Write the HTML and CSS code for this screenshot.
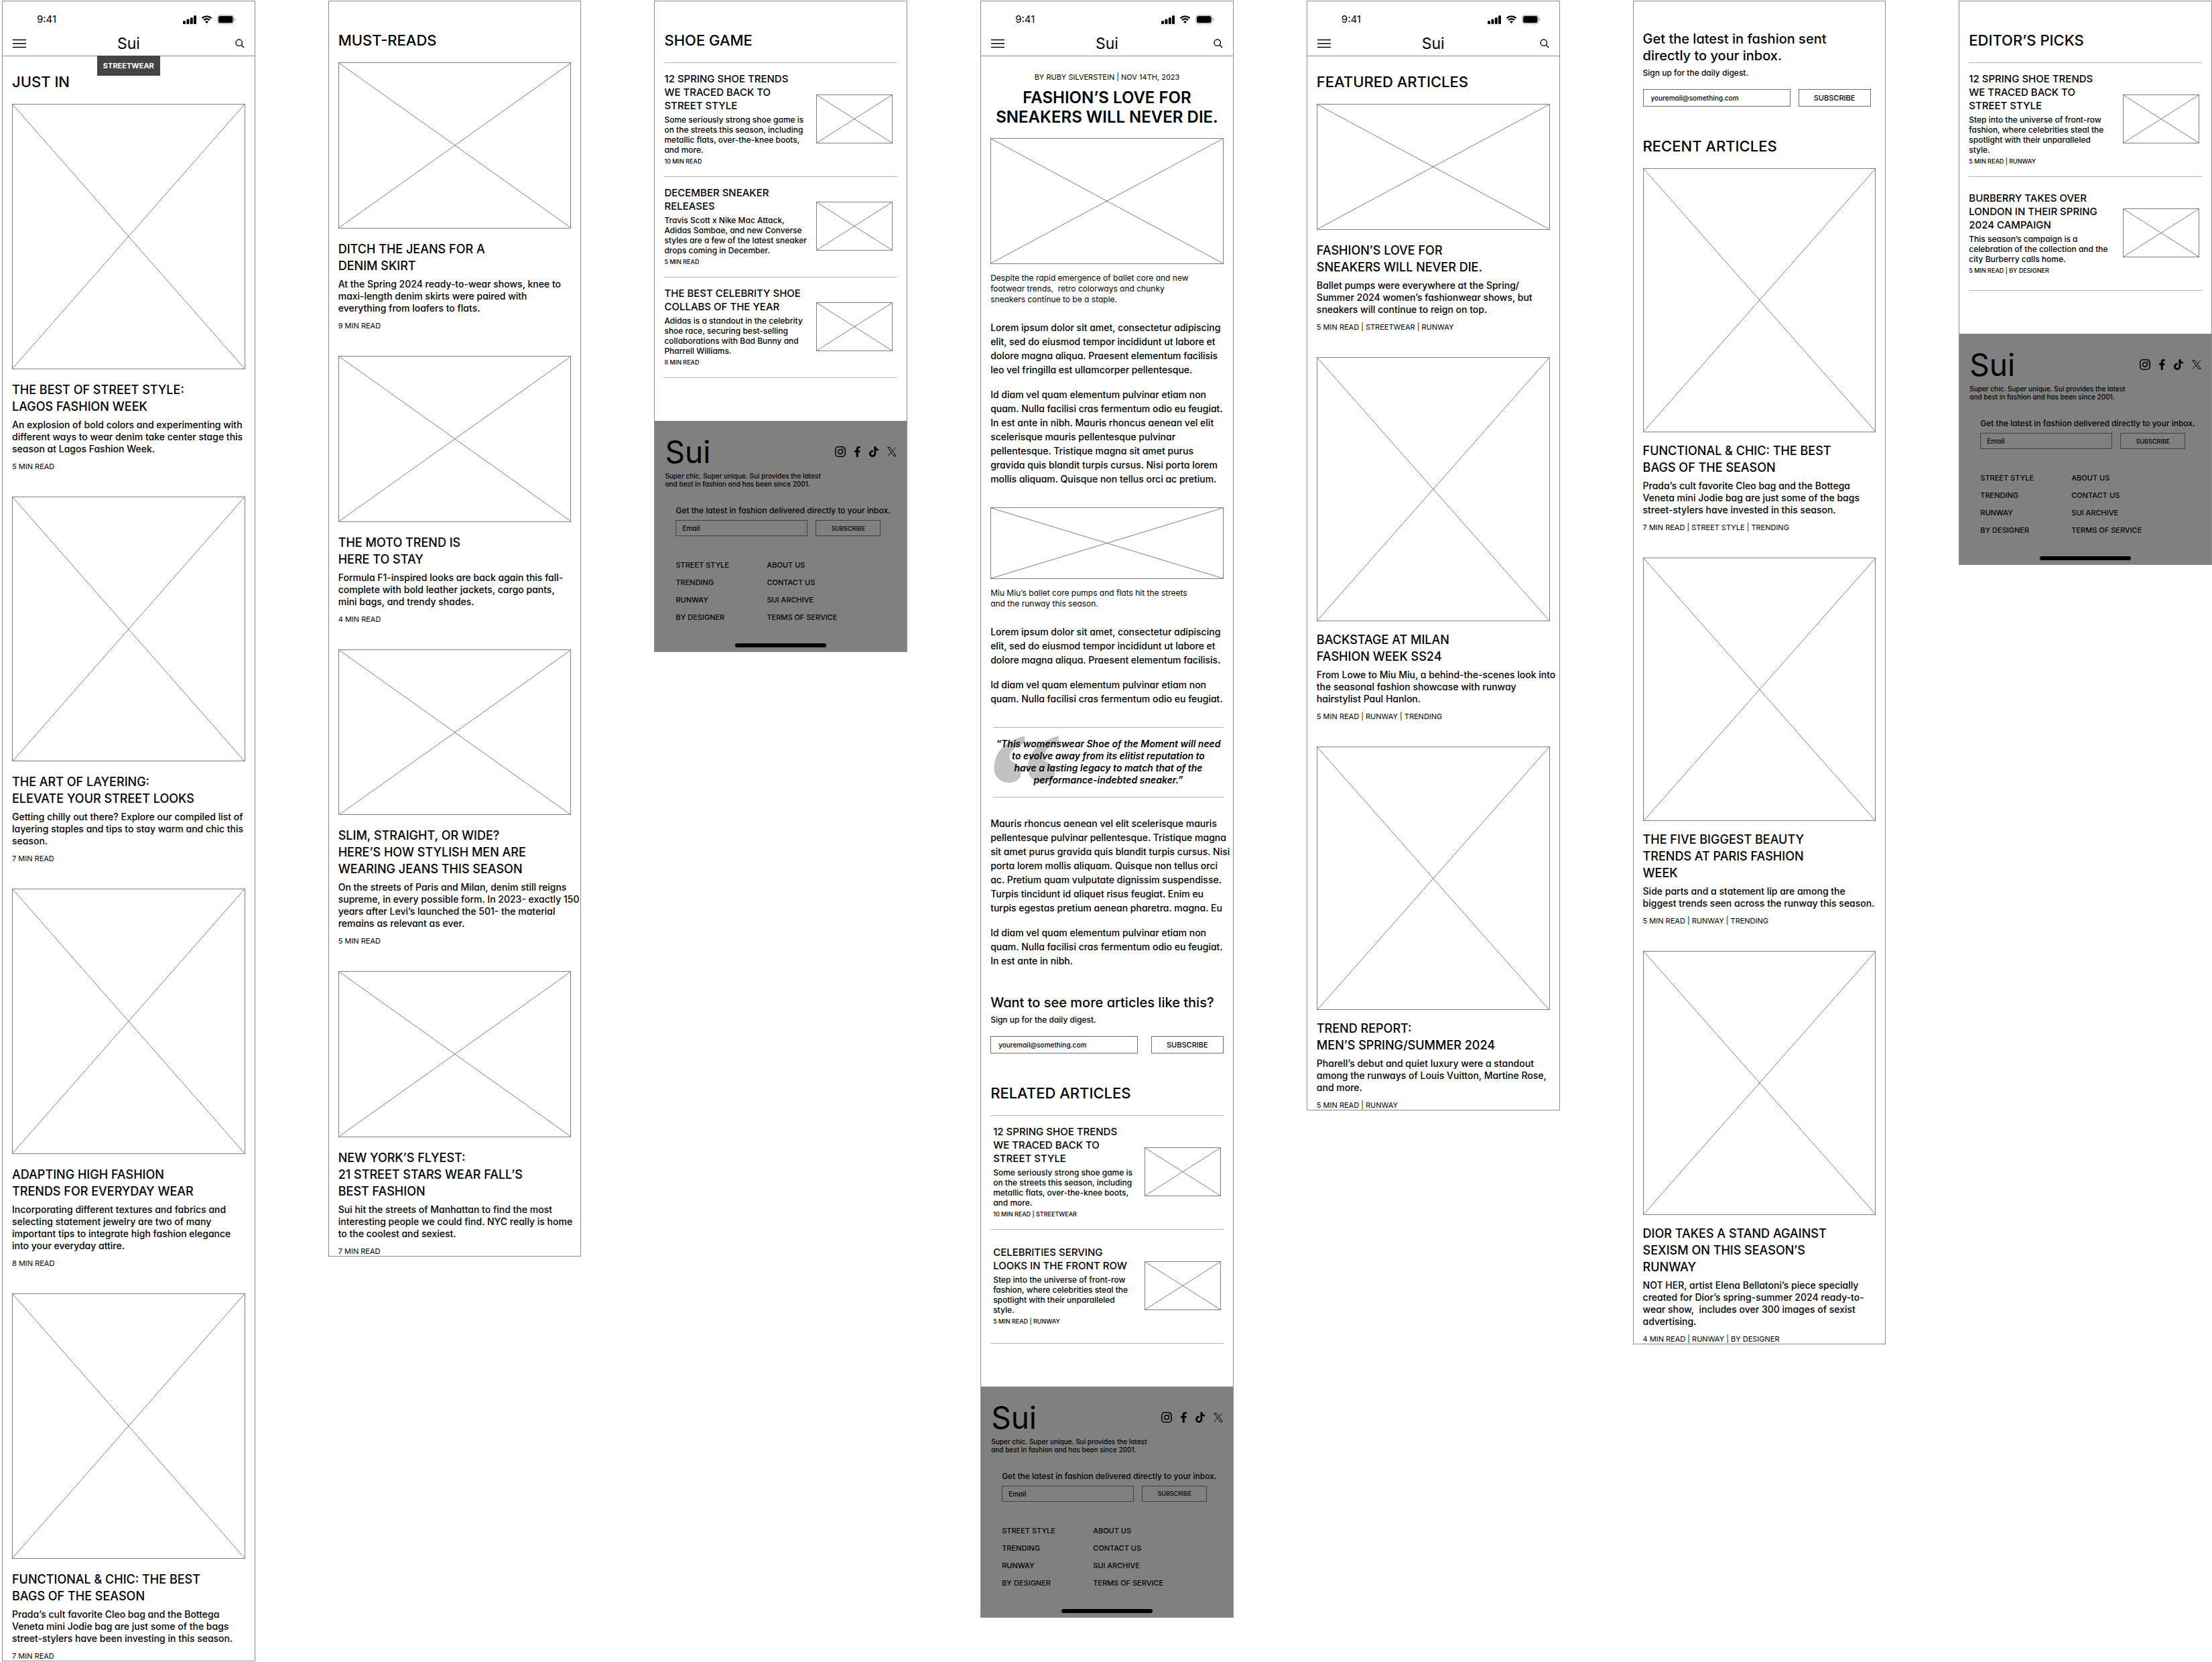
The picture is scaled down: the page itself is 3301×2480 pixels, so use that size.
FILE: index.html
```html
<!DOCTYPE html>
<html lang="en">
<head>
<meta charset="utf-8">
<meta name="viewport" content="width=device-width, initial-scale=1">
<title>Sui</title>
<link rel="stylesheet" href="styles.css">
</head>
<body>
<svg class="sprite" aria-hidden="true">
  <symbol id="signal" viewBox="0 0 20 13"><rect x="0" y="8" width="4" height="5" rx="1.5"/><rect x="5.4" y="5.5" width="4" height="7.5" rx="1.5"/><rect x="10.8" y="3" width="4" height="10" rx="1.5"/><rect x="16" y="0" width="4" height="13" rx="1.5"/></symbol>
  <symbol id="wifi" viewBox="0 0 17 12"><path d="M8.5 2.6c2.3 0 4.5.9 6.1 2.4.1.1.3.1.4 0l1.2-1.2c.1-.1.1-.3 0-.5a11.1 11.1 0 0 0-15.400 0c-.1.1-.1.300 0 .5L2 5c.1.100.3.1.4 0a8.900 8.900 0 0 1 6.100-2.400zm0 3.900c1.300 0 2.500.5 3.400 1.300.1.1.300.1.500 0l1.200-1.200c.1-.1.1-.300 0-.5a7.400 7.400 0 0 0-10.200 0c-.1.100-.1.300 0 .5l1.200 1.200c.1.1.300.1.500 0 .9-.800 2.100-1.300 3.400-1.300zm2.300 2.700c.1.1.1.300 0 .5l-2.100 2.100c-.1.100-.300.1-.4 0L6.200 9.700c-.1-.100-.1-.300 0-.5a3.600 3.600 0 0 1 4.600 0z"/></symbol>
  <symbol id="battery" viewBox="0 0 28 14"><rect x=".8" y=".8" width="23.900" height="12.400" rx="4" fill="none" stroke="#a6a6a6" stroke-width="1.200"/><path d="M26 4.700v4.600c1-.4 1.500-1.300 1.500-2.300S27 5.100 26 4.700z" fill="#a6a6a6"/><rect x="2" y="2" width="21.500" height="10" rx="3"/></symbol>
  <symbol id="menu" viewBox="0 0 20 14"><path d="M0 1.500h20M0 7h20M0 12.500h20" fill="none" stroke="currentColor" stroke-width="1.500"/></symbol>
  <symbol id="search" viewBox="0 0 14 14"><circle cx="5.700" cy="5.700" r="4.700" fill="none" stroke="currentColor" stroke-width="1.400"/><path d="M9.200 9.200l4 4" fill="none" stroke="currentColor" stroke-width="1.400"/></symbol>
  <symbol id="instagram" viewBox="0 0 16 16"><rect x=".8" y=".8" width="14.400" height="14.400" rx="4" fill="none" stroke="currentColor" stroke-width="1.600"/><circle cx="8" cy="8" r="3.300" fill="none" stroke="currentColor" stroke-width="1.600"/><circle cx="12.200" cy="3.800" r="1"/></symbol>
  <symbol id="facebook" viewBox="0 0 9 16"><path d="M5.800 16V9h2.300l.5-2.900H5.800V4.400c0-.9.4-1.600 1.600-1.600h1.400V.3C8.400.200 7.600 0 6.700 0 4.400 0 2.700 1.400 2.700 4v2.100H.200V9h2.500v7z"/></symbol>
  <symbol id="tiktok" viewBox="0 0 14 16"><path d="M10.200 0H7.500v10.900a2.300 2.300 0 1 1-2.300-2.300c.2 0 .4 0 .6.100V5.900a5.100 5.100 0 1 0 4.400 5V5.400a6.300 6.300 0 0 0 3.700 1.200V3.900A3.800 3.800 0 0 1 10.200 0z"/></symbol>
  <symbol id="x" viewBox="0 0 14 14"><path d="M.8.6h3.400l9 12.800H9.800zM12.800.6L7.700 6.200M6 7.900L1 13.400" fill="none" stroke="currentColor"/></symbol>
  <symbol id="cross" viewBox="0 0 100 100" preserveAspectRatio="none"><path d="M0 0L100 100M100 0L0 100" fill="none" stroke="#7d7d7d" vector-effect="non-scaling-stroke"/></symbol>
</svg>

<main class="board">

  <section class="screen">
    <header class="top">
      <div class="status"><span>9:41</span><svg width="20" height="13"><use href="#signal"/></svg><svg width="17" height="12"><use href="#wifi"/></svg><svg width="28" height="14"><use href="#battery"/></svg></div>
      <nav class="nav"><button class="icon-btn" aria-label="Menu"><svg width="20" height="14"><use href="#menu"/></svg></button><a class="logo" href="#">Sui</a><button class="icon-btn" aria-label="Search"><svg width="14" height="14"><use href="#search"/></svg></button></nav>
      <a class="tag" href="#">STREETWEAR</a>
    </header>
    <div class="content content--under-nav">
      <h2 class="heading">JUST IN</h2>
      <article class="card"><svg class="photo photo--tall"><use href="#cross"/></svg>
        <h3>THE BEST OF STREET STYLE:<br>LAGOS FASHION WEEK</h3>
        <p>An explosion of bold colors and experimenting with<br>different ways to wear denim take center stage this<br>season at Lagos Fashion Week.</p>
        <small>5 MIN READ</small></article>
      <article class="card"><svg class="photo photo--tall"><use href="#cross"/></svg>
        <h3>THE ART OF LAYERING:<br>ELEVATE YOUR STREET LOOKS</h3>
        <p>Getting chilly out there? Explore our compiled list of<br>layering staples and tips to stay warm and chic this<br>season.</p>
        <small>7 MIN READ</small></article>
      <article class="card"><svg class="photo photo--tall"><use href="#cross"/></svg>
        <h3>ADAPTING HIGH FASHION<br>TRENDS FOR EVERYDAY WEAR</h3>
        <p>Incorporating different textures and fabrics and<br>selecting statement jewelry are two of many<br>important tips to integrate high fashion elegance<br>into your everyday attire.</p>
        <small>8 MIN READ</small></article>
      <article class="card"><svg class="photo photo--tall"><use href="#cross"/></svg>
        <h3>FUNCTIONAL &amp; CHIC: THE BEST<br>BAGS OF THE SEASON</h3>
        <p>Prada’s cult favorite Cleo bag and the Bottega<br>Veneta mini Jodie bag are just some of the bags<br>street-stylers have been investing in this season.</p>
        <small>7 MIN READ</small></article>
    </div>
  </section>

  <section class="screen">
    <div class="content">
      <h2 class="heading">MUST-READS</h2>
      <article class="card"><svg class="photo photo--medium"><use href="#cross"/></svg>
        <h3>DITCH THE JEANS FOR A<br>DENIM SKIRT</h3>
        <p>At the Spring 2024 ready-to-wear shows, knee to<br>maxi-length denim skirts were paired with<br>everything from loafers to flats.</p>
        <small>9 MIN READ</small></article>
      <article class="card"><svg class="photo photo--medium"><use href="#cross"/></svg>
        <h3>THE MOTO TREND IS<br>HERE TO STAY</h3>
        <p>Formula F1-inspired looks are back again this fall-<br>complete with bold leather jackets, cargo pants,<br>mini bags, and trendy shades.</p>
        <small>4 MIN READ</small></article>
      <article class="card"><svg class="photo photo--medium"><use href="#cross"/></svg>
        <h3>SLIM, STRAIGHT, OR WIDE?<br>HERE’S HOW STYLISH MEN ARE<br>WEARING JEANS THIS SEASON</h3>
        <p>On the streets of Paris and Milan, denim still reigns<br>supreme, in every possible form. In 2023- exactly 150<br>years after Levi’s launched the 501- the material<br>remains as relevant as ever.</p>
        <small>5 MIN READ</small></article>
      <article class="card"><svg class="photo photo--medium"><use href="#cross"/></svg>
        <h3>NEW YORK’S FLYEST:<br>21 STREET STARS WEAR FALL’S<br>BEST FASHION</h3>
        <p>Sui hit the streets of Manhattan to find the most<br>interesting people we could find. NYC really is home<br>to the coolest and sexiest.</p>
        <small>7 MIN READ</small></article>
    </div>
  </section>

  <section class="screen">
    <div class="content">
      <h2 class="heading">SHOE GAME</h2>
      <ul class="feed feed--inset">
        <li><div><h3>12 SPRING SHOE TRENDS<br>WE TRACED BACK TO<br>STREET STYLE</h3><p>Some seriously strong shoe game is<br>on the streets this season, including<br>metallic flats, over-the-knee boots,<br>and more.</p><small>10 MIN READ</small></div><svg class="photo thumb"><use href="#cross"/></svg></li>
        <li><div><h3>DECEMBER SNEAKER<br>RELEASES</h3><p>Travis Scott x Nike Mac Attack,<br>Adidas Sambae, and new Converse<br>styles are a few of the latest sneaker<br>drops coming in December.</p><small>5 MIN READ</small></div><svg class="photo thumb"><use href="#cross"/></svg></li>
        <li><div><h3>THE BEST CELEBRITY SHOE<br>COLLABS OF THE YEAR</h3><p>Adidas is a standout in the celebrity<br>shoe race, securing best-selling<br>collaborations with Bad Bunny and<br>Pharrell Williams.</p><small>8 MIN READ</small></div><svg class="photo thumb"><use href="#cross"/></svg></li>
      </ul>
    </div>
    <footer class="footer">
      <div class="brand"><a class="wordmark" href="#">Sui</a>
        <div class="social"><a href="#" aria-label="Instagram"><svg width="16" height="16"><use href="#instagram"/></svg></a><a href="#" aria-label="Facebook"><svg width="9" height="16"><use href="#facebook"/></svg></a><a href="#" aria-label="TikTok"><svg width="14" height="16"><use href="#tiktok"/></svg></a><a href="#" aria-label="X"><svg width="14" height="14"><use href="#x"/></svg></a></div></div>
      <p class="tagline">Super chic. Super unique. Sui provides the latest<br>and best in fashion and has been since 2001.</p>
      <form class="signup"><label for="mail-a">Get the latest in fashion delivered directly to your inbox.</label><div class="fields"><input id="mail-a" type="email" placeholder="Email"><button type="button">SUBSCRIBE</button></div></form>
      <nav class="links"><a href="#">STREET STYLE</a><a href="#">ABOUT US</a><a href="#">TRENDING</a><a href="#">CONTACT US</a><a href="#">RUNWAY</a><a href="#">SUI ARCHIVE</a><a href="#">BY DESIGNER</a><a href="#">TERMS OF SERVICE</a></nav>
      <div class="home-bar"></div>
    </footer>
  </section>

  <section class="screen">
    <header class="top">
      <div class="status"><span>9:41</span><svg width="20" height="13"><use href="#signal"/></svg><svg width="17" height="12"><use href="#wifi"/></svg><svg width="28" height="14"><use href="#battery"/></svg></div>
      <nav class="nav"><button class="icon-btn" aria-label="Menu"><svg width="20" height="14"><use href="#menu"/></svg></button><a class="logo" href="#">Sui</a><button class="icon-btn" aria-label="Search"><svg width="14" height="14"><use href="#search"/></svg></button></nav>
    </header>
    <div class="content content--under-nav">
      <article class="story">
        <p class="byline">BY RUBY SILVERSTEIN | NOV 14TH, 2023</p>
        <h1>FASHION’S LOVE FOR<br>SNEAKERS WILL NEVER DIE.</h1>
        <figure><svg class="photo photo--wide"><use href="#cross"/></svg><figcaption>Despite the rapid emergence of ballet core and new<br>footwear trends,&nbsp; retro colorways and chunky<br>sneakers continue to be a staple.</figcaption></figure>
        <p>Lorem ipsum dolor sit amet, consectetur adipiscing<br>elit, sed do eiusmod tempor incididunt ut labore et<br>dolore magna aliqua. Praesent elementum facilisis<br>leo vel fringilla est ullamcorper pellentesque.</p>
        <p>Id diam vel quam elementum pulvinar etiam non<br>quam. Nulla facilisi cras fermentum odio eu feugiat.<br>In est ante in nibh. Mauris rhoncus aenean vel elit<br>scelerisque mauris pellentesque pulvinar<br>pellentesque. Tristique magna sit amet purus<br>gravida quis blandit turpis cursus. Nisi porta lorem<br>mollis aliquam. Quisque non tellus orci ac pretium.</p>
        <figure class="figure--inline"><svg class="photo photo--banner"><use href="#cross"/></svg><figcaption>Miu Miu’s ballet core pumps and flats hit the streets<br>and the runway this season.</figcaption></figure>
        <p>Lorem ipsum dolor sit amet, consectetur adipiscing<br>elit, sed do eiusmod tempor incididunt ut labore et<br>dolore magna aliqua. Praesent elementum facilisis.</p>
        <p>Id diam vel quam elementum pulvinar etiam non<br>quam. Nulla facilisi cras fermentum odio eu feugiat.</p>
        <blockquote>“This womenswear Shoe of the Moment will need<br>to evolve away from its elitist reputation to<br>have a lasting legacy to match that of the<br>performance-indebted sneaker.”</blockquote>
        <p>Mauris rhoncus aenean vel elit scelerisque mauris<br>pellentesque pulvinar pellentesque. Tristique magna<br>sit amet purus gravida quis blandit turpis cursus. Nisi<br>porta lorem mollis aliquam. Quisque non tellus orci<br>ac. Pretium quam vulputate dignissim suspendisse.<br>Turpis tincidunt id aliquet risus feugiat. Enim eu<br>turpis egestas pretium aenean pharetra. magna. Eu</p>
        <p>Id diam vel quam elementum pulvinar etiam non<br>quam. Nulla facilisi cras fermentum odio eu feugiat.<br>In est ante in nibh.</p>
      </article>
      <form class="digest digest--spread">
        <h2>Want to see more articles like this?</h2>
        <label for="digest-a">Sign up for the daily digest.</label>
        <div class="fields"><input id="digest-a" type="email" placeholder="youremail@something.com"><button type="button">SUBSCRIBE</button></div>
      </form>
      <h2 class="heading">RELATED ARTICLES</h2>
      <ul class="feed feed--even feed--indent">
        <li><div><h3>12 SPRING SHOE TRENDS<br>WE TRACED BACK TO<br>STREET STYLE</h3><p>Some seriously strong shoe game is<br>on the streets this season, including<br>metallic flats, over-the-knee boots,<br>and more.</p><small>10 MIN READ | STREETWEAR</small></div><svg class="photo thumb"><use href="#cross"/></svg></li>
        <li><div><h3>CELEBRITIES SERVING<br>LOOKS IN THE FRONT ROW</h3><p>Step into the universe of front-row<br>fashion, where celebrities steal the<br>spotlight with their unparalleled<br>style.</p><small>5 MIN READ | RUNWAY</small></div><svg class="photo thumb"><use href="#cross"/></svg></li>
      </ul>
    </div>
    <footer class="footer">
      <div class="brand"><a class="wordmark" href="#">Sui</a>
        <div class="social"><a href="#" aria-label="Instagram"><svg width="16" height="16"><use href="#instagram"/></svg></a><a href="#" aria-label="Facebook"><svg width="9" height="16"><use href="#facebook"/></svg></a><a href="#" aria-label="TikTok"><svg width="14" height="16"><use href="#tiktok"/></svg></a><a href="#" aria-label="X"><svg width="14" height="14"><use href="#x"/></svg></a></div></div>
      <p class="tagline">Super chic. Super unique. Sui provides the latest<br>and best in fashion and has been since 2001.</p>
      <form class="signup"><label for="mail-b">Get the latest in fashion delivered directly to your inbox.</label><div class="fields"><input id="mail-b" type="email" placeholder="Email"><button type="button">SUBSCRIBE</button></div></form>
      <nav class="links"><a href="#">STREET STYLE</a><a href="#">ABOUT US</a><a href="#">TRENDING</a><a href="#">CONTACT US</a><a href="#">RUNWAY</a><a href="#">SUI ARCHIVE</a><a href="#">BY DESIGNER</a><a href="#">TERMS OF SERVICE</a></nav>
      <div class="home-bar"></div>
    </footer>
  </section>

  <section class="screen">
    <header class="top">
      <div class="status"><span>9:41</span><svg width="20" height="13"><use href="#signal"/></svg><svg width="17" height="12"><use href="#wifi"/></svg><svg width="28" height="14"><use href="#battery"/></svg></div>
      <nav class="nav"><button class="icon-btn" aria-label="Menu"><svg width="20" height="14"><use href="#menu"/></svg></button><a class="logo" href="#">Sui</a><button class="icon-btn" aria-label="Search"><svg width="14" height="14"><use href="#search"/></svg></button></nav>
    </header>
    <div class="content content--under-nav">
      <h2 class="heading">FEATURED ARTICLES</h2>
      <article class="card"><svg class="photo photo--wide"><use href="#cross"/></svg>
        <h3>FASHION’S LOVE FOR<br>SNEAKERS WILL NEVER DIE.</h3>
        <p>Ballet pumps were everywhere at the Spring/<br>Summer 2024 women’s fashionwear shows, but<br>sneakers will continue to reign on top.</p>
        <small>5 MIN READ | STREETWEAR | RUNWAY</small></article>
      <article class="card card--close"><svg class="photo photo--high"><use href="#cross"/></svg>
        <h3>BACKSTAGE AT MILAN<br>FASHION WEEK SS24</h3>
        <p>From Lowe to Miu Miu, a behind-the-scenes look into<br>the seasonal fashion showcase with runway<br>hairstylist Paul Hanlon.</p>
        <small>5 MIN READ | RUNWAY | TRENDING</small></article>
      <article class="card card--close"><svg class="photo photo--high"><use href="#cross"/></svg>
        <h3>TREND REPORT:<br>MEN’S SPRING/SUMMER 2024</h3>
        <p>Pharell’s debut and quiet luxury were a standout<br>among the runways of Louis Vuitton, Martine Rose,<br>and more.</p>
        <small>5 MIN READ | RUNWAY</small></article>
    </div>
  </section>

  <section class="screen">
    <div class="content">
      <form class="digest">
        <h2>Get the latest in fashion sent<br>directly to your inbox.</h2>
        <label for="digest-b">Sign up for the daily digest.</label>
        <div class="fields"><input id="digest-b" type="email" placeholder="youremail@something.com"><button type="button">SUBSCRIBE</button></div>
      </form>
      <h2 class="heading">RECENT ARTICLES</h2>
      <article class="card card--close"><svg class="photo photo--high"><use href="#cross"/></svg>
        <h3>FUNCTIONAL &amp; CHIC: THE BEST<br>BAGS OF THE SEASON</h3>
        <p>Prada’s cult favorite Cleo bag and the Bottega<br>Veneta mini Jodie bag are just some of the bags<br>street-stylers have invested in this season.</p>
        <small>7 MIN READ | STREET STYLE | TRENDING</small></article>
      <article class="card card--close"><svg class="photo photo--high"><use href="#cross"/></svg>
        <h3>THE FIVE BIGGEST BEAUTY<br>TRENDS AT PARIS FASHION<br>WEEK</h3>
        <p>Side parts and a statement lip are among the<br>biggest trends seen across the runway this season.</p>
        <small>5 MIN READ | RUNWAY | TRENDING</small></article>
      <article class="card card--close"><svg class="photo photo--high"><use href="#cross"/></svg>
        <h3>DIOR TAKES A STAND AGAINST<br>SEXISM ON THIS SEASON’S<br>RUNWAY</h3>
        <p>NOT HER, artist Elena Bellatoni’s piece specially<br>created for Dior’s spring-summer 2024 ready-to-<br>wear show,&nbsp; includes over 300 images of sexist<br>advertising.</p>
        <small>4 MIN READ | RUNWAY | BY DESIGNER</small></article>
    </div>
  </section>

  <section class="screen">
    <div class="content">
      <h2 class="heading">EDITOR’S PICKS</h2>
      <ul class="feed feed--even">
        <li><div><h3>12 SPRING SHOE TRENDS<br>WE TRACED BACK TO<br>STREET STYLE</h3><p>Step into the universe of front-row<br>fashion, where celebrities steal the<br>spotlight with their unparalleled<br>style.</p><small>5 MIN READ | RUNWAY</small></div><svg class="photo thumb"><use href="#cross"/></svg></li>
        <li><div><h3>BURBERRY TAKES OVER<br>LONDON IN THEIR SPRING<br>2024 CAMPAIGN</h3><p>This season’s campaign is a<br>celebration of the collection and the<br>city Burberry calls home.</p><small>5 MIN READ | BY DESIGNER</small></div><svg class="photo thumb"><use href="#cross"/></svg></li>
      </ul>
    </div>
    <footer class="footer">
      <div class="brand"><a class="wordmark" href="#">Sui</a>
        <div class="social"><a href="#" aria-label="Instagram"><svg width="16" height="16"><use href="#instagram"/></svg></a><a href="#" aria-label="Facebook"><svg width="9" height="16"><use href="#facebook"/></svg></a><a href="#" aria-label="TikTok"><svg width="14" height="16"><use href="#tiktok"/></svg></a><a href="#" aria-label="X"><svg width="14" height="14"><use href="#x"/></svg></a></div></div>
      <p class="tagline">Super chic. Super unique. Sui provides the latest<br>and best in fashion and has been since 2001.</p>
      <form class="signup"><label for="mail-c">Get the latest in fashion delivered directly to your inbox.</label><div class="fields"><input id="mail-c" type="email" placeholder="Email"><button type="button">SUBSCRIBE</button></div></form>
      <nav class="links"><a href="#">STREET STYLE</a><a href="#">ABOUT US</a><a href="#">TRENDING</a><a href="#">CONTACT US</a><a href="#">RUNWAY</a><a href="#">SUI ARCHIVE</a><a href="#">BY DESIGNER</a><a href="#">TERMS OF SERVICE</a></nav>
      <div class="home-bar"></div>
    </footer>
  </section>

</main>
</body>
</html>
```
FILE: styles.css
```css
*, *::before, *::after { box-sizing: border-box; }

body {
  margin: 0;
  background: #fff;
  color: #000;
  font-family: Inter, "Noto Sans", sans-serif;
  font-feature-settings: "cv11";
  font-weight: 500;
}

h1, h2, h3, p, ul, figure, blockquote { margin: 0; padding: 0; }
ul { list-style: none; }
a { color: inherit; text-decoration: none; }
svg { display: block; fill: currentColor; }
small { display: block; font-size: 11px; line-height: 14px; }
input, button { margin: 0; padding: 0; background: none; color: inherit; font: inherit; font-feature-settings: inherit; border-radius: 0; }
input::placeholder { color: inherit; opacity: 1; }
.sprite { position: absolute; width: 0; height: 0; }

.board {
  display: grid;
  grid-template-columns: repeat(7, minmax(360px, 1fr));
  gap: 109px;
  align-items: start;
  padding: 1px 0 0 3px;
}
.screen { border: 1px solid #8c8c8c; white-space: nowrap; }
.content { padding: 44px 14px 0; }
.content--under-nav { padding-top: 24px; }

/* Phone status bar and site navigation */
.top { position: relative; padding-top: 17px; border-bottom: 1px solid #8c8c8c; }
.status { display: flex; align-items: center; gap: 7px; padding: 0 28px 0 51px; font-size: 15px; font-weight: 400; line-height: 20px; }
.status span { margin-right: auto; }
.nav { display: grid; grid-template-columns: 1fr auto 1fr; align-items: center; height: 37px; margin-top: 7px; padding: 0 15px; }
.icon-btn { justify-self: start; border: 0; }
.icon-btn:last-child { justify-self: end; }
.logo { font-size: 23px; font-weight: 400; line-height: 28px; }
.tag {
  position: absolute; top: 100%; left: 50%; transform: translateX(-50%);
  padding: 0 9px; background: #444; color: #fff;
  font-size: 11px; font-weight: 700; line-height: 30px;
}

.heading { margin-bottom: 19px; font-size: 22px; font-weight: 500; line-height: 28px; }

/* Picture placeholders */
.photo { width: 100%; border: 1px solid #7d7d7d; }
.photo use { width: 100%; height: 100%; }
.photo--tall { aspect-ratio: 348 / 396; }
.photo--high { aspect-ratio: 348 / 394; }
.photo--medium { aspect-ratio: 348 / 248; }
.photo--wide { aspect-ratio: 348 / 188; }
.photo--banner { aspect-ratio: 348 / 107; }

.card { margin-bottom: 38px; }
.card:last-child { margin-bottom: 0; }
.card h3 { margin: 18px 0 6px; font-size: 18px; font-weight: 500; line-height: 25px; }
.card--close h3 { margin-top: 15px; }
.card p { margin-bottom: 10px; font-size: 14px; line-height: 18px; }
.card small { font-weight: 400; }

/* Compact list with thumbnails */
.feed { margin-bottom: 64px; border-top: 1px solid #b4b4b4; }
.feed li { display: flex; align-items: center; justify-content: space-between; padding: 14px 4px 16px 0; border-bottom: 1px solid #b4b4b4; }
.feed h3 { font-size: 15px; font-weight: 500; line-height: 20px; }
.feed p { margin: 3px 0; font-size: 12px; line-height: 15px; }
.feed small { font-size: 9px; line-height: 13px; }
.feed--even li { min-height: 170px; }
.feed--inset li { padding-right: 7px; }
.feed--indent li { padding-left: 4px; }
.thumb { flex: none; width: 114px; height: 73px; }

/* Long read */
.story { font-size: 14px; line-height: 21px; }
.story p + p { margin-top: 16px; }
.story .byline { font-size: 11px; font-weight: 400; line-height: 14px; text-align: center; }
.story h1 { margin: 9px 0 17px; font-size: 24px; font-weight: 600; line-height: 29px; text-align: center; }
.story figure { margin-bottom: 23px; }
.story .figure--inline { margin-top: 32px; }
.story figcaption { margin-top: 13px; font-size: 12px; font-weight: 400; line-height: 16px; }
.story blockquote {
  position: relative; z-index: 0;
  margin: 32px 0 28px 4px; padding: 15px 0 16px;
  border: solid #b4b4b4; border-width: 1px 0;
  font-size: 14px; font-style: italic; font-weight: 600; line-height: 18px; text-align: center;
}
.story blockquote::before {
  content: "“"; position: absolute; z-index: -1; top: -26px; left: -10px;
  color: #c2c2c2; font: bold 230px/230px "Liberation Serif", serif;
}

/* Newsletter forms */
.fields { display: flex; gap: 12px; }
.digest { margin-bottom: 45px; }
.story + .digest { margin-top: 40px; }
.digest h2 { margin-bottom: 5px; font-size: 20px; font-weight: 500; line-height: 25px; }
.digest label { display: block; margin-bottom: 16px; font-size: 12px; line-height: 16px; }
.digest input { flex: 0 1 220px; min-width: 0; height: 26px; padding-left: 11px; border: 1px solid #6e6e6e; font-size: 10px; }
.digest button { flex: none; width: 108px; height: 26px; border: 1px solid #6e6e6e; font-size: 11px; }
.digest--spread .fields { justify-content: space-between; }

/* Footer */
.footer { padding: 24px 15px 6px; background: #808080; }
.brand { display: flex; align-items: center; justify-content: space-between; }
.wordmark { font-size: 46px; font-weight: 400; line-height: 44px; }
.social { display: flex; align-items: center; gap: 13px; }
.tagline { margin: 8px 0 26px; font-size: 10px; line-height: 12px; }
.signup { padding-left: 16px; }
.signup label { display: block; margin-bottom: 6px; font-size: 12px; line-height: 16px; }
.signup input { flex: 0 1 197px; min-width: 0; height: 24px; padding-left: 9px; border: 1px solid #404040; font-size: 10px; }
.signup button { flex: none; width: 97px; height: 24px; border: 1px solid #404040; font-size: 9px; }
.links { display: grid; grid-template-columns: 136px 1fr; row-gap: 10px; margin: 35px 0 31px; padding-left: 16px; font-size: 11px; line-height: 16px; }
.home-bar { width: 136px; height: 6px; margin: 0 auto; border-radius: 3px; background: #000; }
```
